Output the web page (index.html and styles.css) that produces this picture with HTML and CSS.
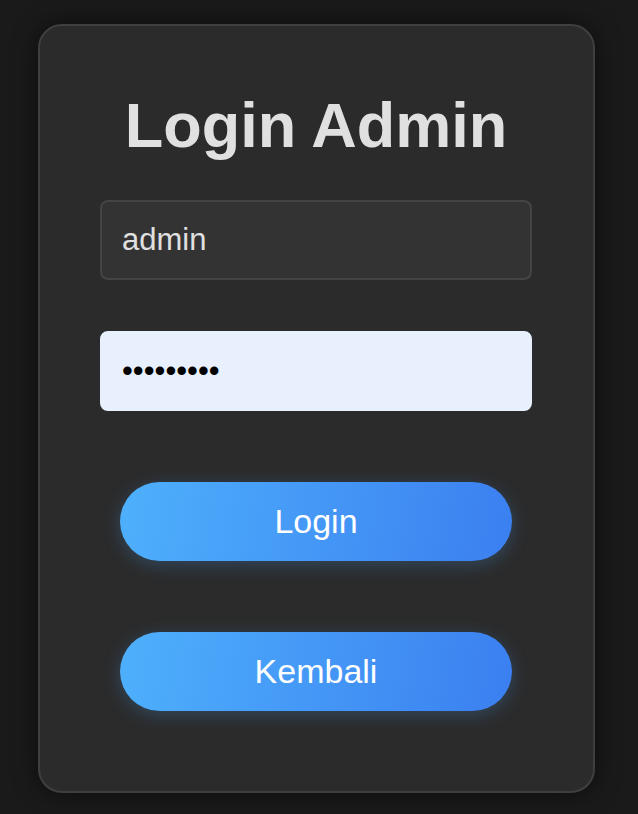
FILE: index.html
```html
<!DOCTYPE html>
<html lang="id">
<head>
<meta charset="utf-8">
<title>Login Admin</title>
<link rel="stylesheet" href="styles.css">
</head>
<body>
<main class="card">
  <h1 class="title">Login Admin</h1>
  <form class="form">
    <input class="field" type="text" value="admin">
    <input class="field field-filled" type="password" value="admin1234">
    <button class="btn btn-first" type="button">Login</button>
    <button class="btn btn-second" type="button">Kembali</button>
  </form>
</main>
</body>
</html>
```
FILE: styles.css
```css
html, body {
  margin: 0;
  height: 100%;
}
body {
  background: #1a1a1a;
  font-family: "Liberation Sans", Arial, sans-serif;
  padding: 24px 0 0 38px;
  box-sizing: border-box;
}
.card {
  width: 557px;
  height: 769px;
  box-sizing: border-box;
  background: #2b2b2b;
  border: 2px solid #3f3f3f;
  border-radius: 24px;
  box-shadow: 0 0 24px rgba(0, 0, 0, 0.55);
  padding: 64px 61px 0 60px;
  display: flex;
  flex-direction: column;
}
.title {
  margin: 0 0 40px;
  font-size: 63px;
  line-height: 70px;
  font-weight: bold;
  color: #e0e0e0;
  text-align: center;
}
.form {
  display: flex;
  flex-direction: column;
}
.field {
  height: 80px;
  box-sizing: border-box;
  border: 2px solid #444;
  border-radius: 8px;
  background: #333;
  color: #e0e0e0;
  font-family: "Liberation Sans", Arial, sans-serif;
  font-size: 31px;
  padding: 0 20px;
  outline: none;
  margin: 0;
}
.field-filled {
  margin-top: 51px;
  background: #e8f0fe;
  border-color: #e8f0fe;
  color: #000;
}
.btn {
  margin: 0 20px;
  height: 79px;
  border: none;
  border-radius: 40px;
  background: linear-gradient(100deg, #4eb0fc 0%, #3b7ff0 100%);
  color: #fff;
  font-family: "Liberation Sans", Arial, sans-serif;
  font-size: 34px;
  box-shadow: 0 4px 18px rgba(70, 150, 230, 0.28);
  cursor: pointer;
  padding: 0;
}
.btn-first {
  margin-top: 71px;
}
.btn-second {
  margin-top: 71px;
}
```
